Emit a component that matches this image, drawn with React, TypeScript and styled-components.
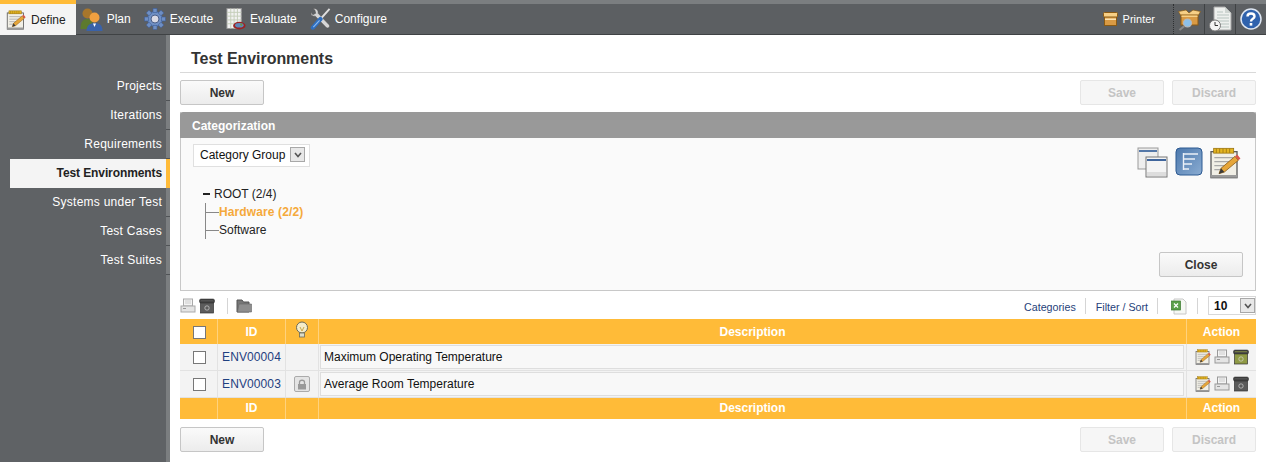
import styled, { createGlobalStyle } from "styled-components";

const GlobalStyle = createGlobalStyle`
  html, body {
    margin: 0;
    padding: 0;
    background: #fff;
    font-family: "Liberation Sans", Arial, sans-serif;
    font-size: 12px;
    color: #222;
  }
  * { box-sizing: border-box; }
`;

const Page = styled.div`
  width: 1266px;
  height: 462px;
  overflow: hidden;
  display: flex;
  flex-direction: column;
`;

const TopBar = styled.div`
  height: 35px;
  display: flex;
  align-items: stretch;
  background: #5c5f62;
  border-top: 4px solid #7b7e80;
  border-bottom: 1px solid #3f4244;
`;

const TopTab = styled.div<{ $active?: boolean }>`
  display: flex;
  align-items: center;
  gap: ${(p) => (p.$active ? "5px" : "4px")};
  height: ${(p) => (p.$active ? "35px" : "30px")};
  margin-top: ${(p) => (p.$active ? "-4px" : "0")};
  padding: ${(p) => (p.$active ? "0 10px 0 6px" : "0 13px 0 0")};
  margin-right: ${(p) => (p.$active ? "4px" : "0")};
  background: ${(p) => (p.$active ? "#f4f4f4" : "transparent")};
  border-top: ${(p) => (p.$active ? "4px solid #ffbb38" : "none")};
  color: ${(p) => (p.$active ? "#222" : "#fff")};
  font-size: 12px;
`;

const TopRight = styled.div`
  margin-left: auto;
  display: flex;
  align-items: stretch;
`;

const PrinterLink = styled.div`
  display: flex;
  align-items: center;
  gap: 5px;
  padding-right: 18px;
  color: #fff;
  font-size: 11px;
`;

const TopIconCell = styled.div<{ $dotted?: boolean }>`
  width: 31px;
  display: flex;
  align-items: center;
  justify-content: center;
  border-left: 1px ${(p) => (p.$dotted ? "dotted #2e3032" : "solid #3f4244")};
`;

const Body = styled.div`
  flex: 1;
  display: flex;
  min-height: 0;
`;

const Sidebar = styled.nav`
  width: 170px;
  padding: 37px 0 0 10px;
  background: linear-gradient(to right, #5f6265 166px, #7b7e80 166px);
  display: flex;
  flex-direction: column;
`;

const SideItem = styled.div<{ $active?: boolean }>`
  height: 29px;
  padding: ${(p) => (p.$active ? "0 4px 2px 0" : "0 8px 2px 0")};
  display: flex;
  align-items: center;
  justify-content: flex-end;
  white-space: nowrap;
  font-size: 12px;
  letter-spacing: ${(p) => (p.$active ? "-0.1px" : "0.25px")};
  font-weight: ${(p) => (p.$active ? "bold" : "normal")};
  color: ${(p) => (p.$active ? "#222" : "#fff")};
  background: ${(p) =>
    p.$active
      ? "#f4f4f4"
      : "linear-gradient(#505356, #505356) no-repeat right bottom / 4px 1px"};
  border-right: ${(p) => (p.$active ? "4px solid #ffbb38" : "none")};
`;

const Main = styled.main`
  flex: 1;
  padding: 10px 10px 0;
  display: flex;
  flex-direction: column;
`;

const Title = styled.h1`
  margin: 0;
  height: 28px;
  padding: 4px 0 0 11px;
  font-size: 16px;
  line-height: 20px;
  letter-spacing: -0.05px;
  font-weight: bold;
  color: #333;
  border-bottom: 1px solid #d9d9d9;
`;

const ButtonRow = styled.div`
  display: flex;
  gap: 8px;
  margin-top: 7px;
  height: 25px;
`;

const Button = styled.button<{ $disabled?: boolean }>`
  width: 84px;
  height: 25px;
  padding: 0;
  border: 1px solid ${(p) => (p.$disabled ? "#e6e6e6" : "#c6c6c6")};
  border-radius: 2px;
  background: ${(p) =>
    p.$disabled ? "#f6f6f6" : "linear-gradient(#fafafa, #ececec)"};
  color: ${(p) => (p.$disabled ? "#c4c4c4" : "#333")};
  font: bold 12px "Liberation Sans", Arial, sans-serif;
`;

const Spacer = styled.div`
  flex: 1;
`;

const Panel = styled.section`
  margin-top: 7px;
  height: 179px;
  border: 1px solid #c8c8c8;
  border-top: none;
  background: #fafafa;
  display: flex;
  flex-direction: column;
`;

const PanelHeader = styled.div`
  height: 26px;
  margin: 0 -1px;
  padding: 1px 0 0 12px;
  display: flex;
  align-items: center;
  background: #999;
  border-radius: 3px 3px 0 0;
  color: #fff;
  font-weight: bold;
  font-size: 12px;
`;

const PanelBody = styled.div`
  flex: 1;
  display: flex;
  justify-content: space-between;
  padding: 6px 12px 13px;
`;

const PanelLeft = styled.div`
  display: flex;
  flex-direction: column;
  align-items: flex-start;
`;

const PanelRight = styled.div`
  display: flex;
  flex-direction: column;
  align-items: flex-end;
  justify-content: space-between;
`;

const ViewIcons = styled.div`
  display: flex;
  gap: 6px;
  margin: 3px 2px 0 0;
`;

const SelectBox = styled.div`
  width: 117px;
  height: 23px;
  padding: 0 4px 2px 6px;
  display: flex;
  align-items: center;
  justify-content: space-between;
  background: #fff;
  border: 1px solid #e0e0e0;
  color: #111;
  font-size: 12px;
`;

const SmallSelectBox = styled(SelectBox)`
  width: 48px;
  height: 19px;
  padding: 0 0 0 5px;
  font-weight: bold;
  border-color: #d8d8d8;
`;

const Arrow = styled.span`
  width: 15px;
  height: 15px;
  display: flex;
  align-items: center;
  justify-content: center;
  background: #e8e8e8;
  border: 1px solid #a8a8a8;
`;

const Tree = styled.div`
  margin: 18px 0 0 10px;
  font-size: 12px;
  color: #222;
`;

const TreeRoot = styled.div`
  height: 18px;
  display: flex;
  align-items: center;
  gap: 4px;
  &::before {
    content: "";
    width: 7px;
    height: 2px;
    background: #222;
  }
`;

const TreeChildren = styled.div`
  margin-left: 2px;
  border-left: 1px solid #888;
  height: 36px;
`;

const TreeLeaf = styled.div<{ $active?: boolean }>`
  height: 18px;
  display: flex;
  align-items: center;
  font-weight: ${(p) => (p.$active ? "bold" : "normal")};
  letter-spacing: ${(p) => (p.$active ? "0.12px" : "0")};
  color: ${(p) => (p.$active ? "#f5a93b" : "#222")};
  &::before {
    content: "";
    width: 13px;
    height: 1px;
    background: #888;
  }
`;

const Toolbar = styled.div`
  height: 28px;
  display: flex;
  align-items: center;
  padding-top: 1px;
`;

const ToolDivider = styled.span<{ $after?: number }>`
  width: 1px;
  height: 16px;
  background: #d5d5d5;
  margin: 0 ${(p) => p.$after ?? 10}px 0 9px;
`;

const ToolLink = styled.span`
  padding-top: 2px;
  color: #1f3f7a;
  font-size: 10.7px;
`;

const ToolLeft = styled.div`
  display: flex;
  align-items: center;
  gap: 3px;
`;

const ToolRight = styled.div`
  margin-left: auto;
  display: flex;
  align-items: center;
`;

const ExcelSlot = styled.span`
  display: flex;
  margin-left: 2px;
  padding-top: 2px;
`;

const Table = styled.table`
  width: 100%;
  table-layout: fixed;
  border-collapse: separate;
  border-spacing: 0;
  margin-bottom: 1px;
`;

const HeadCell = styled.th<{ $h: number; $foot?: boolean }>`
  height: ${(p) => p.$h}px;
  padding: 0 0 ${(p) => (p.$foot ? "2px" : "0")};
  background: #ffbb38;
  border-left: 1px solid #ffd27d;
  color: #fff;
  font-size: 12px;
  font-weight: bold;
  text-align: center;
  &:first-child { border-left: none; }
`;

const Cell = styled.td`
  height: 27px;
  padding: 0;
  background: #f3f3f3;
  border-left: 1px solid #e2e2e2;
  border-bottom: 1px solid #e2e2e2;
  text-align: center;
  vertical-align: middle;
  &:first-child { border-left: none; }
`;

const IdLink = styled.span`
  color: #1f4080;
  font-size: 12px;
  letter-spacing: 0.1px;
`;

const DescField = styled.div`
  height: 24px;
  margin: 0 2px 0 1px;
  padding-left: 3px;
  display: flex;
  align-items: center;
  text-align: left;
  background: #f8f8f8;
  border: 1px solid #dedede;
  color: #111;
  font-size: 12px;
`;

const CheckBox = styled.span`
  display: inline-block;
  width: 13px;
  height: 13px;
  margin-left: 2px;
  background: #fff;
  border: 1px solid #777;
  vertical-align: middle;
`;

const ActionIcons = styled.div`
  display: flex;
  justify-content: center;
  gap: 3px;
`;

const LockBadge = styled.span`
  display: inline-flex;
  width: 16px;
  height: 16px;
  align-items: center;
  justify-content: center;
  background: #e4e4e4;
  border: 1px solid #aaa;
  border-radius: 2px;
  vertical-align: middle;
`;

const Chevron = () => (
  <svg width="10" height="8" viewBox="0 0 10 8">
    <path d="M2 2 L5 5.5 L8 2" fill="none" stroke="#555" strokeWidth="1.6" />
  </svg>
);

const NotePad = ({ size = 20 }: { size?: number }) => (
  <svg width={size} height={size} viewBox="0 0 24 24">
    <rect x="1.5" y="3.5" width="19.5" height="19.5" fill="#f1efe6" stroke="#5c5c5c" />
    <rect x="1.5" y="21" width="19.5" height="2" fill="#9a9a9a" />
    <rect x="3.5" y="1" width="15" height="3.6" fill="#e4b522" stroke="#9a7410" strokeWidth="0.6" />
    <path d="M5.5 1.2v3.2M8 1.2v3.2M10.5 1.2v3.2M13 1.2v3.2M15.5 1.2v3.2" stroke="#9a7410" strokeWidth="0.6" />
    <path d="M4 8h14M4 11h12M4 14h8M4 17h5" stroke="#a8a8a8" />
    <path d="M7.5 20 L9 16 L19.5 7 L22 10 L11.5 18.8 Z" fill="#e6a63a" stroke="#8a5a14" strokeWidth="0.6" />
    <path d="M19.5 7 L22 10 L23.6 8.6 L21.2 5.6 Z" fill="#d9564a" />
    <path d="M7.5 20 L9 16 L11.5 18.8 Z" fill="#3a3a3a" />
  </svg>
);

const People = () => (
  <svg width="23" height="24" viewBox="0 0 22 24">
    <circle cx="7" cy="6.5" r="5" fill="#a8762c" />
    <path d="M0 22 C0 14 3 12 7 12 C11 12 13 15 13 22 Z" fill="#5d7a2e" />
    <circle cx="14" cy="10.5" r="5" fill="#f0a040" />
    <path d="M6 24 C6 18 10 16 14 16 C19 16 22 18 22 24 Z" fill="#3a62a8" />
    <path d="M12.5 16.5 L14 20 L15.5 16.5 Z" fill="#fff" />
  </svg>
);

const Gear = () => (
  <svg width="22" height="22" viewBox="0 0 22 22">
    <g fill="#6f8fc4" stroke="#3f5f9a" strokeWidth="0.6">
      <circle cx="11" cy="11" r="7.5" />
      <rect x="9" y="0.5" width="4" height="4" />
      <rect x="9" y="17.5" width="4" height="4" />
      <rect x="0.5" y="9" width="4" height="4" />
      <rect x="17.5" y="9" width="4" height="4" />
      <rect x="9" y="0.5" width="4" height="4" transform="rotate(45 11 11)" />
      <rect x="9" y="17.5" width="4" height="4" transform="rotate(45 11 11)" />
      <rect x="0.5" y="9" width="4" height="4" transform="rotate(45 11 11)" />
      <rect x="17.5" y="9" width="4" height="4" transform="rotate(45 11 11)" />
    </g>
    <circle cx="11" cy="11" r="4" fill="#d8d8e4" stroke="#4a5f8a" />
  </svg>
);

const Report = () => (
  <svg width="20" height="24" viewBox="0 0 21 24">
    <rect x="1" y="1" width="15" height="21" fill="#f2f2f2" stroke="#999" />
    <path d="M5 1v21M8.5 1v21M12 1v21M1 5h15M1 9h15M1 13h15M1 17h15" stroke="#c4cdb8" />
    <ellipse cx="14" cy="19" rx="6.5" ry="4" fill="#9c2222" />
    <ellipse cx="14" cy="18.5" rx="4.5" ry="2.4" fill="#5e87b8" />
    <circle cx="16" cy="18" r="1.2" fill="#6a9a3c" />
  </svg>
);

const Tools = () => (
  <svg width="21" height="24" viewBox="0 0 22 24">
    <path d="M1 5 L3 7.5 L6 6 L5 2.5 L3 1 C7 0.5 9 3 8.5 6 L20 18 C21.5 20 19 22.5 17 21 L5.5 9 C2.5 9.5 0.5 8 1 5 Z" fill="#d6d6d6" stroke="#555" strokeWidth="0.6" />
    <path d="M20.5 1.5 L11 12" stroke="#e0e0e0" strokeWidth="2" />
    <path d="M11 12 L3 21" stroke="#2f6fc0" strokeWidth="4.4" strokeLinecap="round" />
    <path d="M10 13.5 L3.5 20.5" stroke="#8ebcf0" strokeWidth="1.1" />
  </svg>
);

const Box = () => (
  <svg width="15" height="14" viewBox="0 0 15 14">
    <rect x="1.5" y="4.5" width="12" height="9" fill="#d99a44" stroke="#8a5a14" />
    <rect x="0.5" y="0.5" width="14" height="4.5" rx="1" fill="#f6cf86" stroke="#8a5a14" />
    <rect x="2" y="6.5" width="11" height="1.5" fill="#fbe3b2" />
  </svg>
);

const BoxSearch = () => (
  <svg width="23" height="23" viewBox="0 0 23 23">
    <path d="M3 8 L0.5 3.5 L8 2 L11 5 L15 2 L22.5 3.5 L20 8 Z" fill="#f6cf86" stroke="#8a5a14" strokeWidth="0.7" />
    <rect x="3" y="7" width="17" height="10" fill="#d99a44" stroke="#8a5a14" />
    <rect x="3.5" y="7.5" width="16" height="1.5" fill="#f6cf86" />
    <circle cx="9.5" cy="15" r="4" fill="#8cc0ea" stroke="#b8b8b8" strokeWidth="1.2" />
    <path d="M6.5 18 L1.5 22" stroke="#888" strokeWidth="2.2" />
  </svg>
);

const DocClock = () => (
  <svg width="23" height="26" viewBox="0 0 23 26">
    <path d="M5 1 H16 L22 7 V24 H5 Z" fill="#eef0ee" stroke="#a8a8a8" />
    <path d="M8 6h6M8 9h12M8 12h12M8 15h12M12 18h8M12 21h8" stroke="#b8c4c0" />
    <path d="M16 1 V7 H22 Z" fill="#cfd5d2" />
    <circle cx="6" cy="19.5" r="5.5" fill="#f4f4f4" stroke="#777" />
    <path d="M6 16 V19.5 H9" fill="none" stroke="#333" />
  </svg>
);

const Help = () => (
  <svg width="22" height="22" viewBox="0 0 22 22">
    <circle cx="11" cy="11" r="10" fill="#2f62ad" stroke="#dfe7f2" strokeWidth="1.5" />
    <path d="M7.5 8.5 C7.5 4.5 14.5 4.5 14.5 8.5 C14.5 11 11 10.5 11 13.5" fill="none" stroke="#fff" strokeWidth="2.4" />
    <rect x="9.7" y="15" width="2.6" height="2.6" fill="#fff" />
  </svg>
);

const WindowsIcon = () => (
  <svg width="32" height="32" viewBox="0 0 32 32">
    <rect x="1" y="1" width="20" height="21" fill="#eee" stroke="#999" />
    <rect x="2" y="3" width="18" height="2" fill="#5578a8" />
    <rect x="9" y="10" width="21" height="20" fill="#f4f4f4" stroke="#777" />
    <rect x="10" y="12" width="19" height="2" fill="#3f659c" />
    <rect x="10" y="25" width="19" height="4" fill="#ddd" />
  </svg>
);

const TreeIcon = () => (
  <svg width="28" height="29" viewBox="0 0 28 29">
    <defs>
      <linearGradient id="treeBg" x1="0" y1="0" x2="1" y2="1">
        <stop offset="0" stopColor="#4c78ad" />
        <stop offset="1" stopColor="#8aacd2" />
      </linearGradient>
    </defs>
    <rect x="1" y="1" width="26" height="27" rx="4" fill="url(#treeBg)" stroke="#2d5a92" />
    <path d="M8.5 6 V23 M8.5 7 H23 M8.5 12 H20 M8.5 17 H17 M8.5 22 H14" stroke="#eaf0f8" strokeWidth="1.4" fill="none" />
  </svg>
);

const Printer = ({ dim }: { dim?: boolean }) => (
  <svg width="16" height="16" viewBox="0 0 16 16">
    <rect x="3.5" y="1" width="9" height="7" fill="#f4f4f4" stroke={dim ? "#aaa" : "#999"} />
    <path d="M5 3h6M5 5h6" stroke="#ccc" />
    <rect x="1" y="8" width="14" height="6" fill="#e4e4e4" stroke={dim ? "#aaa" : "#999"} />
    <rect x="3" y="10" width="3" height="1" fill="#999" />
  </svg>
);

const Bin = ({ color = "#5c5c5c" }: { color?: string }) => (
  <svg width="16" height="16" viewBox="0 0 16 16">
    <rect x="1.5" y="4" width="13" height="11" fill={color} stroke="#333" strokeWidth="0.7" />
    <rect x="0.5" y="1" width="15" height="4" rx="1.5" fill="#444" stroke="#222" strokeWidth="0.5" />
    <rect x="2" y="2.2" width="12" height="1" fill={color} opacity="0.8" />
    <circle cx="8" cy="10" r="2.2" fill="none" stroke="#ddd" strokeWidth="0.9" opacity="0.7" />
  </svg>
);

const Folder = () => (
  <svg width="16" height="14" viewBox="0 0 16 14">
    <path d="M1 1 H6 L7.5 3 H13 V13 H1 Z" fill="#777" stroke="#555" />
    <path d="M3 5 H15.5 V13 H1.5 Z" fill="#8e8e8e" stroke="#666" strokeWidth="0.6" />
  </svg>
);

const Excel = () => (
  <svg width="18" height="17" viewBox="0 0 18 17">
    <path d="M4 1 H13 L16 4 V16 H4 Z" fill="#f6f8f4" stroke="#c8c8c8" />
    <rect x="1.5" y="3" width="9" height="9" fill="#5aa04a" stroke="#3a7a2e" strokeWidth="0.7" />
    <path d="M4 5.5 L8 9.5 M8 5.5 L4 9.5" stroke="#fff" strokeWidth="1.2" />
  </svg>
);

const Bulb = () => (
  <svg width="14" height="18" viewBox="0 0 14 18">
    <circle cx="7" cy="6.5" r="5.5" fill="#f5ecc8" stroke="#6a6a5a" />
    <path d="M5 6 L7 10 L9 6" fill="none" stroke="#c8a84a" />
    <rect x="4.5" y="12" width="5" height="4" fill="#dcdcc8" stroke="#6a6a5a" strokeWidth="0.8" />
  </svg>
);

const Lock = () => (
  <svg width="10" height="11" viewBox="0 0 10 11">
    <path d="M2.5 5 V3.2 C2.5 0.6 7.5 0.6 7.5 3.2 V5" fill="none" stroke="#999" strokeWidth="1.3" />
    <rect x="1" y="5" width="8" height="5.5" fill="#999" />
  </svg>
);

const rows = [
  { id: "ENV00004", desc: "Maximum Operating Temperature", locked: false, bin: "#8f9a45" },
  { id: "ENV00003", desc: "Average Room Temperature", locked: true, bin: "#5a5a5a" },
];

const navItems = [
  "Projects",
  "Iterations",
  "Requirements",
  "Test Environments",
  "Systems under Test",
  "Test Cases",
  "Test Suites",
];

const colWidths = [37, 68, 33, 868, 70];

export default function App() {
  return (
    <Page>
      <GlobalStyle />
      <TopBar>
        <TopTab $active>
          <NotePad />
          Define
        </TopTab>
        <TopTab><People />Plan</TopTab>
        <TopTab><Gear />Execute</TopTab>
        <TopTab><Report />Evaluate</TopTab>
        <TopTab><Tools />Configure</TopTab>
        <TopRight>
          <PrinterLink>
            <Box />
            Printer
          </PrinterLink>
          <TopIconCell $dotted><BoxSearch /></TopIconCell>
          <TopIconCell><DocClock /></TopIconCell>
          <TopIconCell><Help /></TopIconCell>
        </TopRight>
      </TopBar>
      <Body>
        <Sidebar>
          {navItems.map((item) => (
            <SideItem key={item} $active={item === "Test Environments"}>
              {item}
            </SideItem>
          ))}
        </Sidebar>
        <Main>
          <Title>Test Environments</Title>
          <ButtonRow>
            <Button>New</Button>
            <Spacer />
            <Button $disabled>Save</Button>
            <Button $disabled>Discard</Button>
          </ButtonRow>
          <Panel>
            <PanelHeader>Categorization</PanelHeader>
            <PanelBody>
              <PanelLeft>
                <SelectBox>
                  Category Group
                  <Arrow><Chevron /></Arrow>
                </SelectBox>
                <Tree>
                  <TreeRoot>ROOT (2/4)</TreeRoot>
                  <TreeChildren>
                    <TreeLeaf $active>Hardware (2/2)</TreeLeaf>
                    <TreeLeaf>Software</TreeLeaf>
                  </TreeChildren>
                </Tree>
              </PanelLeft>
              <PanelRight>
                <ViewIcons>
                  <WindowsIcon />
                  <TreeIcon />
                  <NotePad size={32} />
                </ViewIcons>
                <Button>Close</Button>
              </PanelRight>
            </PanelBody>
          </Panel>
          <Toolbar>
            <ToolLeft>
              <Printer dim />
              <Bin />
              <ToolDivider $after={5} />
              <Folder />
            </ToolLeft>
            <ToolRight>
              <ToolLink>Categories</ToolLink>
              <ToolDivider />
              <ToolLink>Filter / Sort</ToolLink>
              <ToolDivider />
              <ExcelSlot><Excel /></ExcelSlot>
              <ToolDivider />
              <SmallSelectBox>
                10
                <Arrow><Chevron /></Arrow>
              </SmallSelectBox>
            </ToolRight>
          </Toolbar>
          <Table>
            <colgroup>
              {colWidths.map((w, i) => (
                <col key={i} width={w} />
              ))}
            </colgroup>
            <thead>
              <tr>
                <HeadCell $h={25}><CheckBox /></HeadCell>
                <HeadCell $h={25}>ID</HeadCell>
                <HeadCell $h={25}><Bulb /></HeadCell>
                <HeadCell $h={25}>Description</HeadCell>
                <HeadCell $h={25}>Action</HeadCell>
              </tr>
            </thead>
            <tbody>
              {rows.map((row) => (
                <tr key={row.id}>
                  <Cell><CheckBox /></Cell>
                  <Cell><IdLink>{row.id}</IdLink></Cell>
                  <Cell>
                    {row.locked && (
                      <LockBadge><Lock /></LockBadge>
                    )}
                  </Cell>
                  <Cell><DescField>{row.desc}</DescField></Cell>
                  <Cell>
                    <ActionIcons>
                      <NotePad size={16} />
                      <Printer />
                      <Bin color={row.bin} />
                    </ActionIcons>
                  </Cell>
                </tr>
              ))}
            </tbody>
            <tfoot>
              <tr>
                <HeadCell $h={21} $foot />
                <HeadCell $h={21} $foot>ID</HeadCell>
                <HeadCell $h={21} $foot />
                <HeadCell $h={21} $foot>Description</HeadCell>
                <HeadCell $h={21} $foot>Action</HeadCell>
              </tr>
            </tfoot>
          </Table>
          <ButtonRow>
            <Button>New</Button>
            <Spacer />
            <Button $disabled>Save</Button>
            <Button $disabled>Discard</Button>
          </ButtonRow>
        </Main>
      </Body>
    </Page>
  );
}
